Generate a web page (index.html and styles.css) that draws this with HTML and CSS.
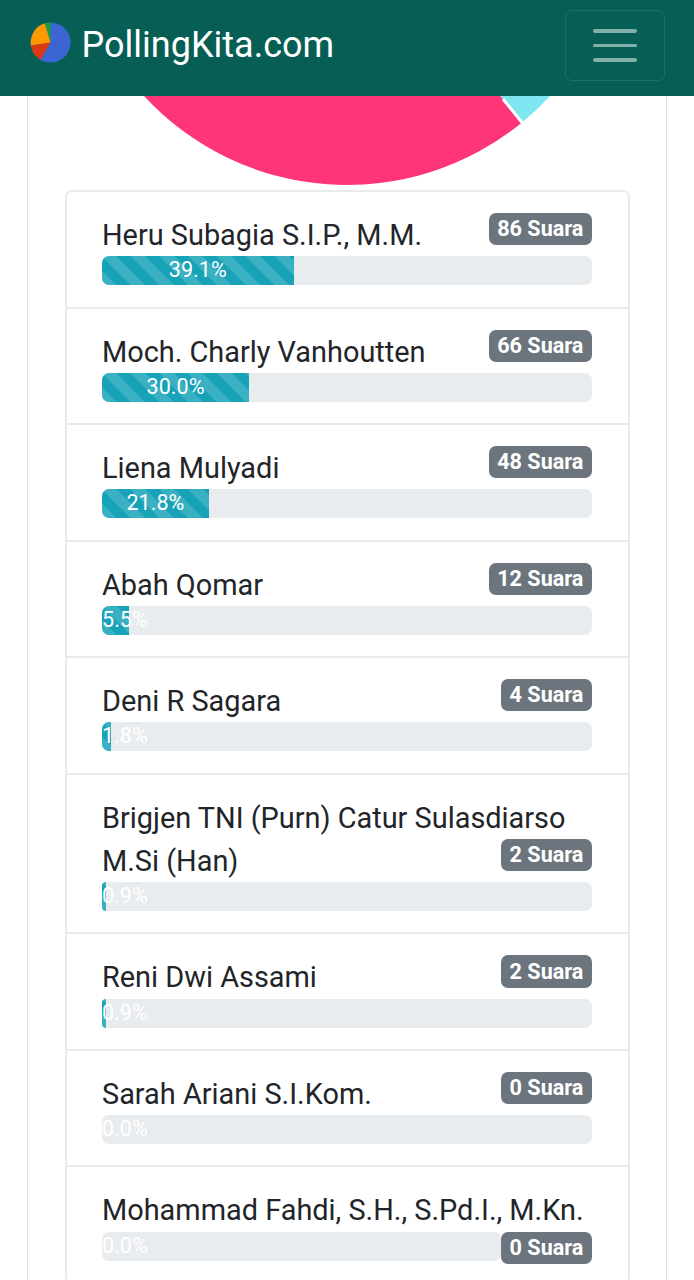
FILE: index.html
```html
<!DOCTYPE html>
<html lang="id">
<head>
<meta charset="utf-8">
<title>PollingKita.com</title>
<link rel="stylesheet" href="styles.css">
</head>
<body>
<header class="navbar">
  <a class="brand" href="#">
    <svg class="brand-logo" viewBox="0 0 42 42" aria-hidden="true">
      <circle cx="21" cy="21" r="20.5" fill="#3b66d2"/>
      <path d="M21 21 L15 .9 A20.5 20.5 0 0 1 21.5 .5 Z" fill="#1f9a3a"/>
      <path d="M21 21 L1 24 A20.5 20.5 0 0 1 15 1.4 Z" fill="#ff9900"/>
      <path d="M21 21 L10.5 38.6 A20.5 20.5 0 0 1 1 24 Z" fill="#dc3912"/>
    </svg>
    <span class="brand-text">PollingKita.com</span>
  </a>
  <button class="toggler" type="button" aria-label="Menu"><span></span><span></span><span></span></button>
</header>
<main class="card">
  <svg class="chart" viewBox="0 187 638 90" aria-hidden="true">
    <path d="M319 0 L522 187 A276 276 0 0 1 494 213.500 Z" fill="#7fe5f0"/>
    <path d="M319 0 L494 213.500 A276 276 0 0 1 116 187 Z" fill="#ff3579"/>
    <path d="M475 190 L495 214.700" stroke="#fff" stroke-width="3" fill="none"/>
  </svg>
  <ul class="list">
    <li class="item"><span class="name">Heru Subagia S.I.P., M.M.</span><span class="badge">86 Suara</span>
      <div class="progress"><div class="bar striped" style="width:39.1%">39.1%</div></div></li>
    <li class="item"><span class="name">Moch. Charly Vanhoutten</span><span class="badge">66 Suara</span>
      <div class="progress"><div class="bar striped" style="width:30%">30.0%</div></div></li>
    <li class="item"><span class="name">Liena Mulyadi</span><span class="badge">48 Suara</span>
      <div class="progress"><div class="bar striped" style="width:21.8%">21.8%</div></div></li>
    <li class="item"><span class="name">Abah Qomar</span><span class="badge">12 Suara</span>
      <div class="progress"><div class="bar striped" style="width:5.5%">5.5%</div></div></li>
    <li class="item"><span class="name">Deni R Sagara</span><span class="badge">4 Suara</span>
      <div class="progress"><div class="bar striped" style="width:1.8%">1.8%</div></div></li>
    <li class="item"><span class="name">Brigjen TNI (Purn) Catur Sulasdiarso M.Si (Han)</span><span class="badge">2 Suara</span>
      <div class="progress"><div class="bar striped" style="width:0.9%">0.9%</div></div></li>
    <li class="item"><span class="name">Reni Dwi Assami</span><span class="badge">2 Suara</span>
      <div class="progress"><div class="bar striped" style="width:0.9%">0.9%</div></div></li>
    <li class="item"><span class="name">Sarah Ariani S.I.Kom.</span><span class="badge">0 Suara</span>
      <div class="progress"><div class="bar striped" style="width:0%">0.0%</div></div></li>
    <li class="item"><span class="name">Mohammad Fahdi, S.H., S.Pd.I., M.Kn.</span><span class="badge">0 Suara</span>
      <div class="progress"><div class="bar striped" style="width:0%">0.0%</div></div></li>
  </ul>
</main>
</body>
</html>
```
FILE: styles.css
```css
* { box-sizing: border-box; }
html, body {
  margin: 0;
  height: 1280px;
  overflow: hidden;
  background: #fff;
}
body {
  font-family: Roboto, "Liberation Sans", sans-serif;
  color: #212529;
  font-size: 28.9px;
  line-height: 43.4px;
}
.navbar {
  height: 96px;
  background: #075e54;
  display: flex;
  align-items: flex-start;
  justify-content: space-between;
  padding: 10px 29px 0 30px;
}
.brand {
  display: flex;
  align-items: center;
  gap: 10.6px;
  height: 70px;
  color: #fff;
  font-size: 36px;
  text-decoration: none;
}
.brand-logo { width: 41px; height: 41px; display: block; margin-bottom: 6px; }
.brand-text { padding-top: 2px; }
.toggler {
  width: 100px;
  height: 71px;
  padding: 0;
  background: transparent;
  border: 1.5px solid rgba(255, 255, 255, .1);
  border-radius: 7px;
  display: flex;
  flex-direction: column;
  align-items: center;
  justify-content: center;
  gap: 11px;
}
.toggler span {
  display: block;
  width: 44px;
  height: 3.500px;
  border-radius: 2px;
  background: rgba(255, 255, 255, .5);
}
.card {
  margin: 0 27px;
  padding: 0 36px 0 37px;
  border-left: 1.5px solid #dfdfdf;
  border-right: 1.5px solid #dfdfdf;
  min-height: 1184px;
}
.chart {
  display: block;
  width: 638px;
  height: 90px;
  margin: 0 -36px 4px -37px;
}
.list {
  list-style: none;
  margin: 0;
  padding: 0;
  border: 2px solid #e9eaec;
  border-radius: 7px;
}
.item {
  padding: 22px 36px 21.300px 35px;
  border-bottom: 2px solid #e9eaec;
}
.item:last-child { border-bottom: 0; }
.name { color: #212529; }
.badge {
  float: right;
  margin-top: -1px;
  padding: 5.4px 8.6px;
  font-size: 21.6px;
  font-weight: 700;
  line-height: 1;
  color: #fff;
  background: #6c757d;
  border-radius: 7px;
}
.progress {
  height: 28.800px;
  margin-top: -1px;
  background: #e9ecef;
  border-radius: 7px;
  font-size: 21.6px;
  line-height: 28.8px;
  display: flex;
  overflow: visible;
}
.bar {
  display: flex;
  flex-direction: column;
  justify-content: center;
  text-align: center;
  white-space: nowrap;
  color: #fff;
  background-color: #17a2b8;
  border-radius: 7px 0 0 7px;
}
.striped {
  background-image: linear-gradient(45deg,
    rgba(255,255,255,.15) 25%, transparent 25%,
    transparent 50%, rgba(255,255,255,.15) 50%,
    rgba(255,255,255,.15) 75%, transparent 75%, transparent);
  background-size: 28.8px 28.8px;
}
```
